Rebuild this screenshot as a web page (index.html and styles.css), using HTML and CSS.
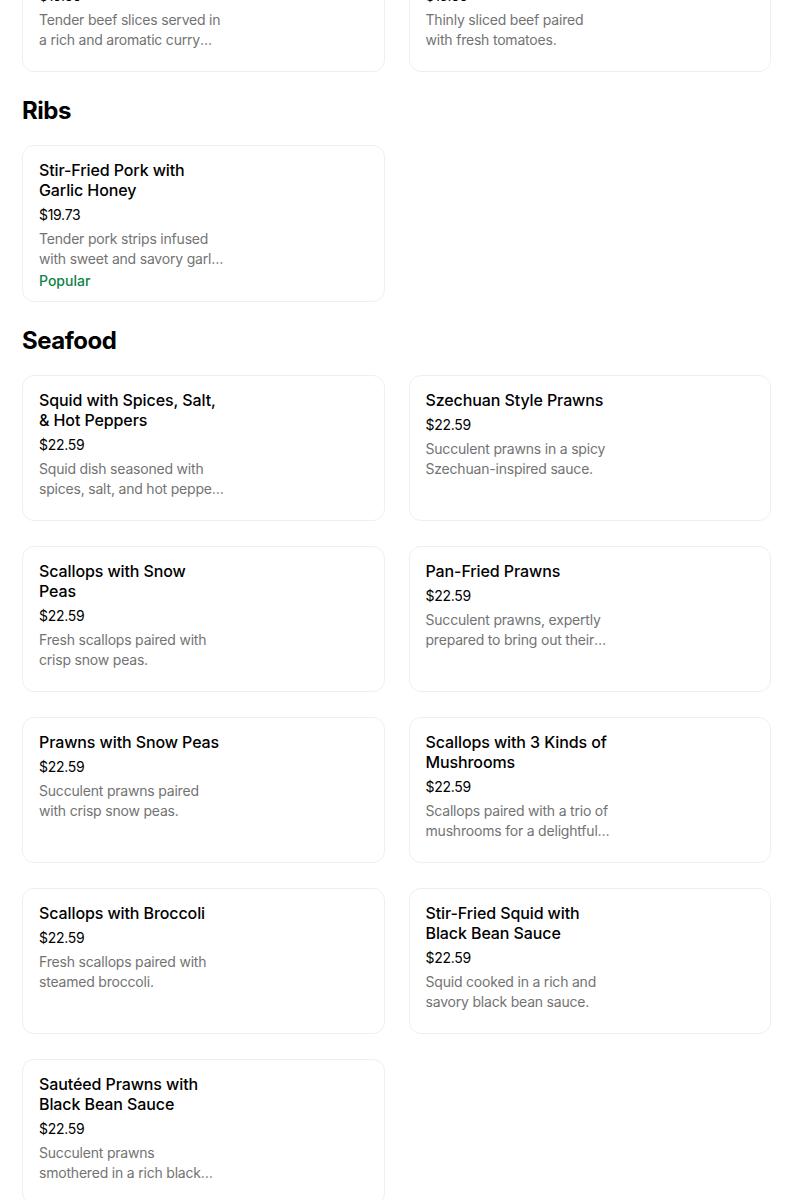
FILE: index.html
```html
<!DOCTYPE html>
<html lang="en">
<head>
<meta charset="utf-8">
<title>Menu</title>
<link rel="stylesheet" href="styles.css">
</head>
<body>
<main class="menu">
  <section class="category">
    <div class="grid">
      <div class="card">
        <div class="info">
          <h3 class="name">Beef with Curry Sauce in Clay Pot</h3>
          <div class="price">$19.99</div>
          <p class="desc">Tender beef slices served in a rich and aromatic curry sauce.</p>
        </div>
      </div>
      <div class="card">
        <div class="info">
          <h3 class="name">Beef with Fresh Tomatoes</h3>
          <div class="price">$19.99</div>
          <p class="desc">Thinly sliced beef paired with fresh tomatoes.</p>
        </div>
      </div>
    </div>
  </section>

  <section class="category">
    <h2 class="heading">Ribs</h2>
    <div class="grid">
      <div class="card">
        <div class="info">
          <h3 class="name">Stir-Fried Pork with Garlic Honey</h3>
          <div class="price">$19.73</div>
          <p class="desc">Tender pork strips infused with sweet and savory garlic honey glaze.</p>
          <div class="tag">Popular</div>
        </div>
      </div>
    </div>
  </section>

  <section class="category">
    <h2 class="heading">Seafood</h2>
    <div class="grid">
      <div class="card">
        <div class="info">
          <h3 class="name">Squid with Spices, Salt, &amp; Hot Peppers</h3>
          <div class="price">$22.59</div>
          <p class="desc">Squid dish seasoned with spices, salt, and hot peppers for a bold kick.</p>
        </div>
      </div>
      <div class="card">
        <div class="info">
          <h3 class="name">Szechuan Style Prawns</h3>
          <div class="price">$22.59</div>
          <p class="desc">Succulent prawns in a spicy Szechuan-inspired sauce.</p>
        </div>
      </div>
      <div class="card">
        <div class="info">
          <h3 class="name">Scallops with Snow Peas</h3>
          <div class="price">$22.59</div>
          <p class="desc">Fresh scallops paired with crisp snow peas.</p>
        </div>
      </div>
      <div class="card">
        <div class="info">
          <h3 class="name">Pan-Fried Prawns</h3>
          <div class="price">$22.59</div>
          <p class="desc">Succulent prawns, expertly prepared to bring out their natural sweetness.</p>
        </div>
      </div>
      <div class="card">
        <div class="info">
          <h3 class="name">Prawns with Snow Peas</h3>
          <div class="price">$22.59</div>
          <p class="desc">Succulent prawns paired with crisp snow peas.</p>
        </div>
      </div>
      <div class="card">
        <div class="info">
          <h3 class="name">Scallops with 3 Kinds of Mushrooms</h3>
          <div class="price">$22.59</div>
          <p class="desc">Scallops paired with a trio of mushrooms for a delightful earthy flavor.</p>
        </div>
      </div>
      <div class="card">
        <div class="info">
          <h3 class="name">Scallops with Broccoli</h3>
          <div class="price">$22.59</div>
          <p class="desc">Fresh scallops paired with steamed broccoli.</p>
        </div>
      </div>
      <div class="card">
        <div class="info">
          <h3 class="name">Stir-Fried Squid with Black Bean Sauce</h3>
          <div class="price">$22.59</div>
          <p class="desc">Squid cooked in a rich and savory black bean sauce.</p>
        </div>
      </div>
      <div class="card">
        <div class="info">
          <h3 class="name">Sautéed Prawns with Black Bean Sauce</h3>
          <div class="price">$22.59</div>
          <p class="desc">Succulent prawns smothered in a rich black bean sauce.</p>
        </div>
      </div>
    </div>
  </section>
</main>
</body>
</html>
```

FILE: styles.css
```css
* { box-sizing: border-box; }

html, body {
  margin: 0;
  padding: 0;
  background: #ffffff;
}

body {
  font-family: Inter, "Noto Sans", "Liberation Sans", sans-serif;
  color: #000000;
  overflow: hidden;
}

.menu {
  margin-top: -74px;
  padding: 0 33px 0 22px;
  display: flex;
  flex-direction: column;
  gap: 23px;
}

.heading {
  margin: 0 0 18px;
  font-size: 24px;
  line-height: 32px;
  font-weight: 700;
  letter-spacing: -0.5px;
}

.grid {
  display: grid;
  grid-template-columns: 1fr 1fr;
  column-gap: 24px;
  row-gap: 25px;
}

.card {
  min-height: 146px;
  border: 1px solid #efefef;
  border-radius: 12px;
  padding: 14px 16px 10px;
  display: flex;
}

.info {
  width: 186px;
  display: flex;
  flex-direction: column;
}

.name {
  margin: 0;
  font-size: 16px;
  line-height: 20px;
  font-weight: 500;
  letter-spacing: -0.1px;
}

.price {
  margin-top: 5px;
  font-size: 14px;
  line-height: 20px;
  letter-spacing: -0.3px;
}

.desc {
  margin: 4px 0 0;
  font-size: 14px;
  line-height: 20px;
  color: #737373;
  letter-spacing: -0.2px;
  display: -webkit-box;
  -webkit-line-clamp: 2;
  -webkit-box-orient: vertical;
  overflow: hidden;
}

.tag {
  margin-top: 2px;
  font-size: 14px;
  line-height: 20px;
  font-weight: 500;
  color: #0e8345;
}
```
